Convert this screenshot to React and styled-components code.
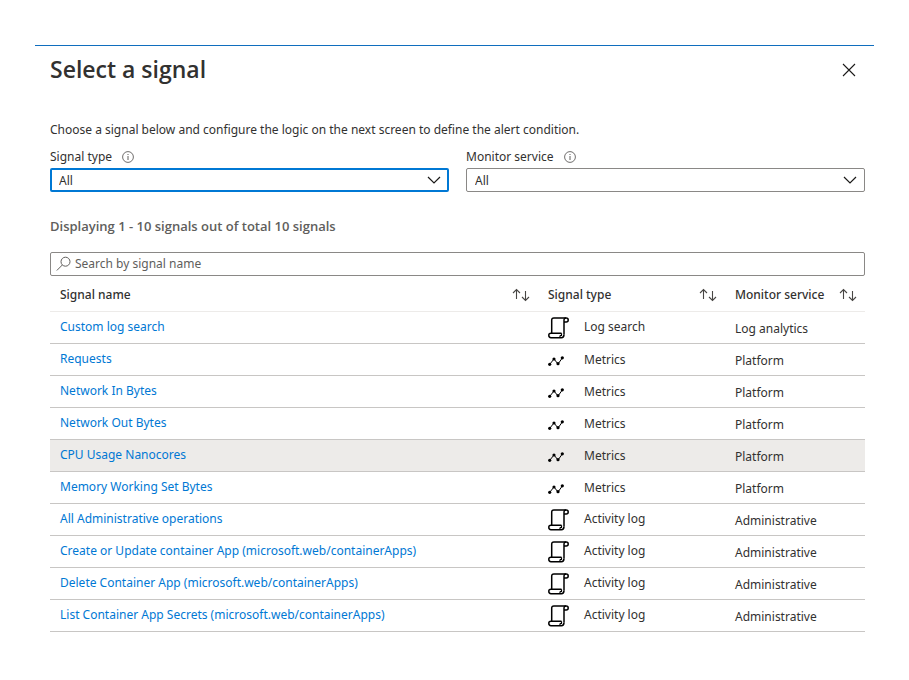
import React, { useState } from "react";
import styled, { createGlobalStyle } from "styled-components";

const GlobalStyle = createGlobalStyle`
  *, *::before, *::after { box-sizing: border-box; }
  body {
    margin: 0;
    background: #fff;
    color: #323130;
    font-family: "Segoe UI", "Noto Sans", "Open Sans", sans-serif;
    font-size: 12px;
    line-height: 16px;
  }
  button, input, select { font: inherit; color: inherit; }
`;

const Page = styled.main`
  padding: 45px 35px;
`;

const Panel = styled.section`
  border-top: 1px solid #106ebe;
  padding: 8px 9px 0 15px;
`;

const PanelHeader = styled.header`
  display: flex;
  align-items: center;
  justify-content: space-between;
  height: 32px;
`;

const Title = styled.h1`
  margin: 0;
  padding-bottom: 2px;
  font-family: "Segoe UI", "Open Sans", sans-serif;
  font-size: 23px;
  line-height: 30px;
  font-weight: 600;
`;

const IconButton = styled.button`
  display: flex;
  align-items: center;
  justify-content: center;
  width: 32px;
  height: 32px;
  padding: 0;
  border: 0;
  background: none;
  cursor: pointer;
`;

const Intro = styled.p`
  margin: 36px 0 0;
`;

const Filters = styled.div`
  display: grid;
  grid-template-columns: 1fr 1fr;
  gap: 17px;
  margin-top: 11px;
`;

const FieldLabel = styled.label`
  display: flex;
  align-items: center;
  gap: 10px;
  height: 16px;
  margin-bottom: 3px;
`;

const SelectBox = styled.div`
  display: grid;
  align-items: center;

  > * { grid-area: 1 / 1; }
  > svg { justify-self: end; margin-right: 8px; pointer-events: none; }
`;

const Select = styled.select`
  appearance: none;
  width: 100%;
  height: 24px;
  padding: 2px 28px 0 ${(p) => (p.$active ? 7 : 8)}px;
  border: ${(p) => (p.$active ? "2px solid #0078d4" : "1px solid #8a8886")};
  border-radius: 2px;
  outline: none;
  background: #fff;
`;

const Summary = styled.p`
  margin: 26px 0 0;
  color: #605e5c;
  font-family: "Segoe UI", "Open Sans", sans-serif;
  font-size: 13px;
  font-weight: 600;
`;

const SearchBox = styled.div`
  display: flex;
  align-items: center;
  gap: 4px;
  height: 24px;
  margin-top: 18px;
  padding: 0 5px;
  border: 1px solid #8a8886;
  border-radius: 2px;
`;

const SearchInput = styled.input`
  flex: 1;
  min-width: 0;
  height: 22px;
  padding: 0 0 2px;
  border: 0;
  outline: none;
  background: none;
  &::placeholder { color: #605e5c; opacity: 1; }
`;

const Table = styled.table`
  width: 100%;
  table-layout: fixed;
  border-collapse: separate;
  border-spacing: 0;
`;

const Column = styled.col`
  width: ${(p) => p.$width};
`;

const HeadCell = styled.th`
  height: 36px;
  padding: 2px 8px 0 10px;
  border-bottom: 1px solid #edebe9;
  text-align: left;
  font-weight: 500;
`;

const SortButton = styled.button`
  display: flex;
  align-items: center;
  justify-content: space-between;
  width: 100%;
  padding: 0;
  border: 0;
  background: none;
  text-align: left;
  white-space: nowrap;
  cursor: pointer;
`;

const Row = styled.tr`
  background: ${(p) => (p.$selected ? "#edebe9" : "transparent")};
`;

const Cell = styled.td`
  height: 32px;
  padding: ${(p) => (p.$low ? "2px 8px 0" : "0 8px 2px")} 10px;
  border-bottom: 1px solid #c8c6c4;
  white-space: nowrap;
`;

const SignalLink = styled.a`
  color: #0078d4;
  text-decoration: none;
`;

const SignalType = styled.span`
  display: grid;
  grid-template-columns: 36px 1fr;
  align-items: center;
  height: 24px;
  padding-top: ${(p) => (p.$low ? "2px" : "0")};

  > svg { margin-top: 2px; }
`;

const CloseIcon = () => (
  <svg width="14" height="14" viewBox="0 0 14 14" fill="none" stroke="#1b1a19" strokeWidth="1.1" aria-hidden="true">
    <path d="M1 1l12 12M13 1L1 13" />
  </svg>
);

const InfoIcon = () => (
  <svg width="12" height="12" viewBox="0 0 12 12" fill="none" stroke="#605e5c" aria-hidden="true">
    <circle cx="6" cy="6" r="5.4" strokeWidth=".9" />
    <path d="M6 5v4M6 3v1" />
  </svg>
);

const ChevronIcon = () => (
  <svg width="14" height="10" viewBox="0 0 14 10" fill="none" stroke="#1b1a19" strokeWidth="1.2" aria-hidden="true">
    <path d="M1 2l6 6 6-6" />
  </svg>
);

const SearchIcon = () => (
  <svg width="15" height="16" viewBox="0 0 15 16" fill="none" stroke="#605e5c" strokeWidth="1" aria-hidden="true">
    <circle cx="9.5" cy="5.7" r="4.5" />
    <path d="M6.3 9L.8 14.5" />
  </svg>
);

const SortIcon = () => (
  <svg width="18" height="14" viewBox="0 0 18 14" fill="none" stroke="#484644" strokeWidth="1.1" aria-hidden="true">
    <path d="M4.500 11V1.500M1 5l3.500-3.500L8 5M13.500 3v9.500M10 9l3.500 3.500L17 9" />
  </svg>
);

const ScrollIcon = () => (
  <svg width="22" height="22" viewBox="0 0 22 22" fill="none" stroke="#000" strokeWidth="1.5" strokeLinejoin="round" aria-hidden="true">
    <path d="M3.700 16V3.200Q3.700 1 5.900 1H18" />
    <path d="M16 17.500V3.200Q16 1 18.200 1Q20.200 1 20.200 3Q20.200 5 18.200 5H16" />
    <path d="M13.500 16.200H3Q.8 16.200 .8 18.300Q.8 20.700 3 20.700H13.300Q16 20.700 16 17.500" />
    <path d="M12 18.500H13.500V16.200M12 18.500V20.700" strokeWidth="1.2" />
  </svg>
);

const MetricsIcon = () => (
  <svg width="16" height="10" viewBox="0 0 16 10" fill="#000" stroke="#000" aria-hidden="true">
    <path d="M1.700 8.300L6 3l4 5 4.300-6" fill="none" strokeWidth="1" />
    <g stroke="none">
      <circle cx="1.700" cy="8.300" r="1.600" />
      <circle cx="6" cy="3" r="1.600" />
      <circle cx="10" cy="7.700" r="1.600" />
      <circle cx="14.300" cy="1.800" r="1.600" />
    </g>
  </svg>
);

const columns = [
  { title: "Signal name", width: "auto" },
  { title: "Signal type", width: "187px" },
  { title: "Monitor service", width: "140px" },
];

const signals = [
  ["Custom log search", "Log search", "Log analytics"],
  ["Requests", "Metrics", "Platform"],
  ["Network In Bytes", "Metrics", "Platform"],
  ["Network Out Bytes", "Metrics", "Platform"],
  ["CPU Usage Nanocores", "Metrics", "Platform"],
  ["Memory Working Set Bytes", "Metrics", "Platform"],
  ["All Administrative operations", "Activity log", "Administrative"],
  ["Create or Update container App (microsoft.web/containerApps)", "Activity log", "Administrative"],
  ["Delete Container App (microsoft.web/containerApps)", "Activity log", "Administrative"],
  ["List Container App Secrets (microsoft.web/containerApps)", "Activity log", "Administrative"],
];

function Filter({ id, label, active, options }) {
  return (
    <div>
      <FieldLabel htmlFor={id}>
        {label}
        <InfoIcon />
      </FieldLabel>
      <SelectBox>
        <Select id={id} $active={active}>
          <option>All</option>
          {options.map((o) => (
            <option key={o}>{o}</option>
          ))}
        </Select>
        <ChevronIcon />
      </SelectBox>
    </div>
  );
}

export default function App() {
  const [query, setQuery] = useState("");
  const shown = signals.filter(([name]) => name.toLowerCase().includes(query.toLowerCase()));

  return (
    <>
      <GlobalStyle />
      <Page>
        <Panel>
          <PanelHeader>
            <Title>Select a signal</Title>
            <IconButton type="button" aria-label="Close">
              <CloseIcon />
            </IconButton>
          </PanelHeader>
          <Intro>Choose a signal below and configure the logic on the next screen to define the alert condition.</Intro>
          <Filters>
            <Filter id="signal-type" label="Signal type" active options={["Log search", "Metrics", "Activity log"]} />
            <Filter id="monitor-service" label="Monitor service" options={["Log analytics", "Platform", "Administrative"]} />
          </Filters>
          <Summary>Displaying 1 - 10 signals out of total 10 signals</Summary>
          <SearchBox>
            <SearchIcon />
            <SearchInput
              type="text"
              aria-label="Search by signal name"
              placeholder="Search by signal name"
              value={query}
              onChange={(e) => setQuery(e.target.value)}
            />
          </SearchBox>
          <Table>
            <colgroup>
              {columns.map((c) => (
                <Column key={c.title} $width={c.width} />
              ))}
            </colgroup>
            <thead>
              <tr>
                {columns.map((c) => (
                  <HeadCell key={c.title} scope="col">
                    <SortButton type="button">
                      {c.title}
                      <SortIcon />
                    </SortButton>
                  </HeadCell>
                ))}
              </tr>
            </thead>
            <tbody>
              {shown.map(([name, type, service]) => (
                <Row key={name} $selected={name === "CPU Usage Nanocores"}>
                  <Cell>
                    <SignalLink href="#">{name}</SignalLink>
                  </Cell>
                  <Cell>
                    <SignalType $low={type === "Metrics"}>
                      {type === "Metrics" ? <MetricsIcon /> : <ScrollIcon />}
                      {type}
                    </SignalType>
                  </Cell>
                  <Cell $low>{service}</Cell>
                </Row>
              ))}
            </tbody>
          </Table>
        </Panel>
      </Page>
    </>
  );
}
